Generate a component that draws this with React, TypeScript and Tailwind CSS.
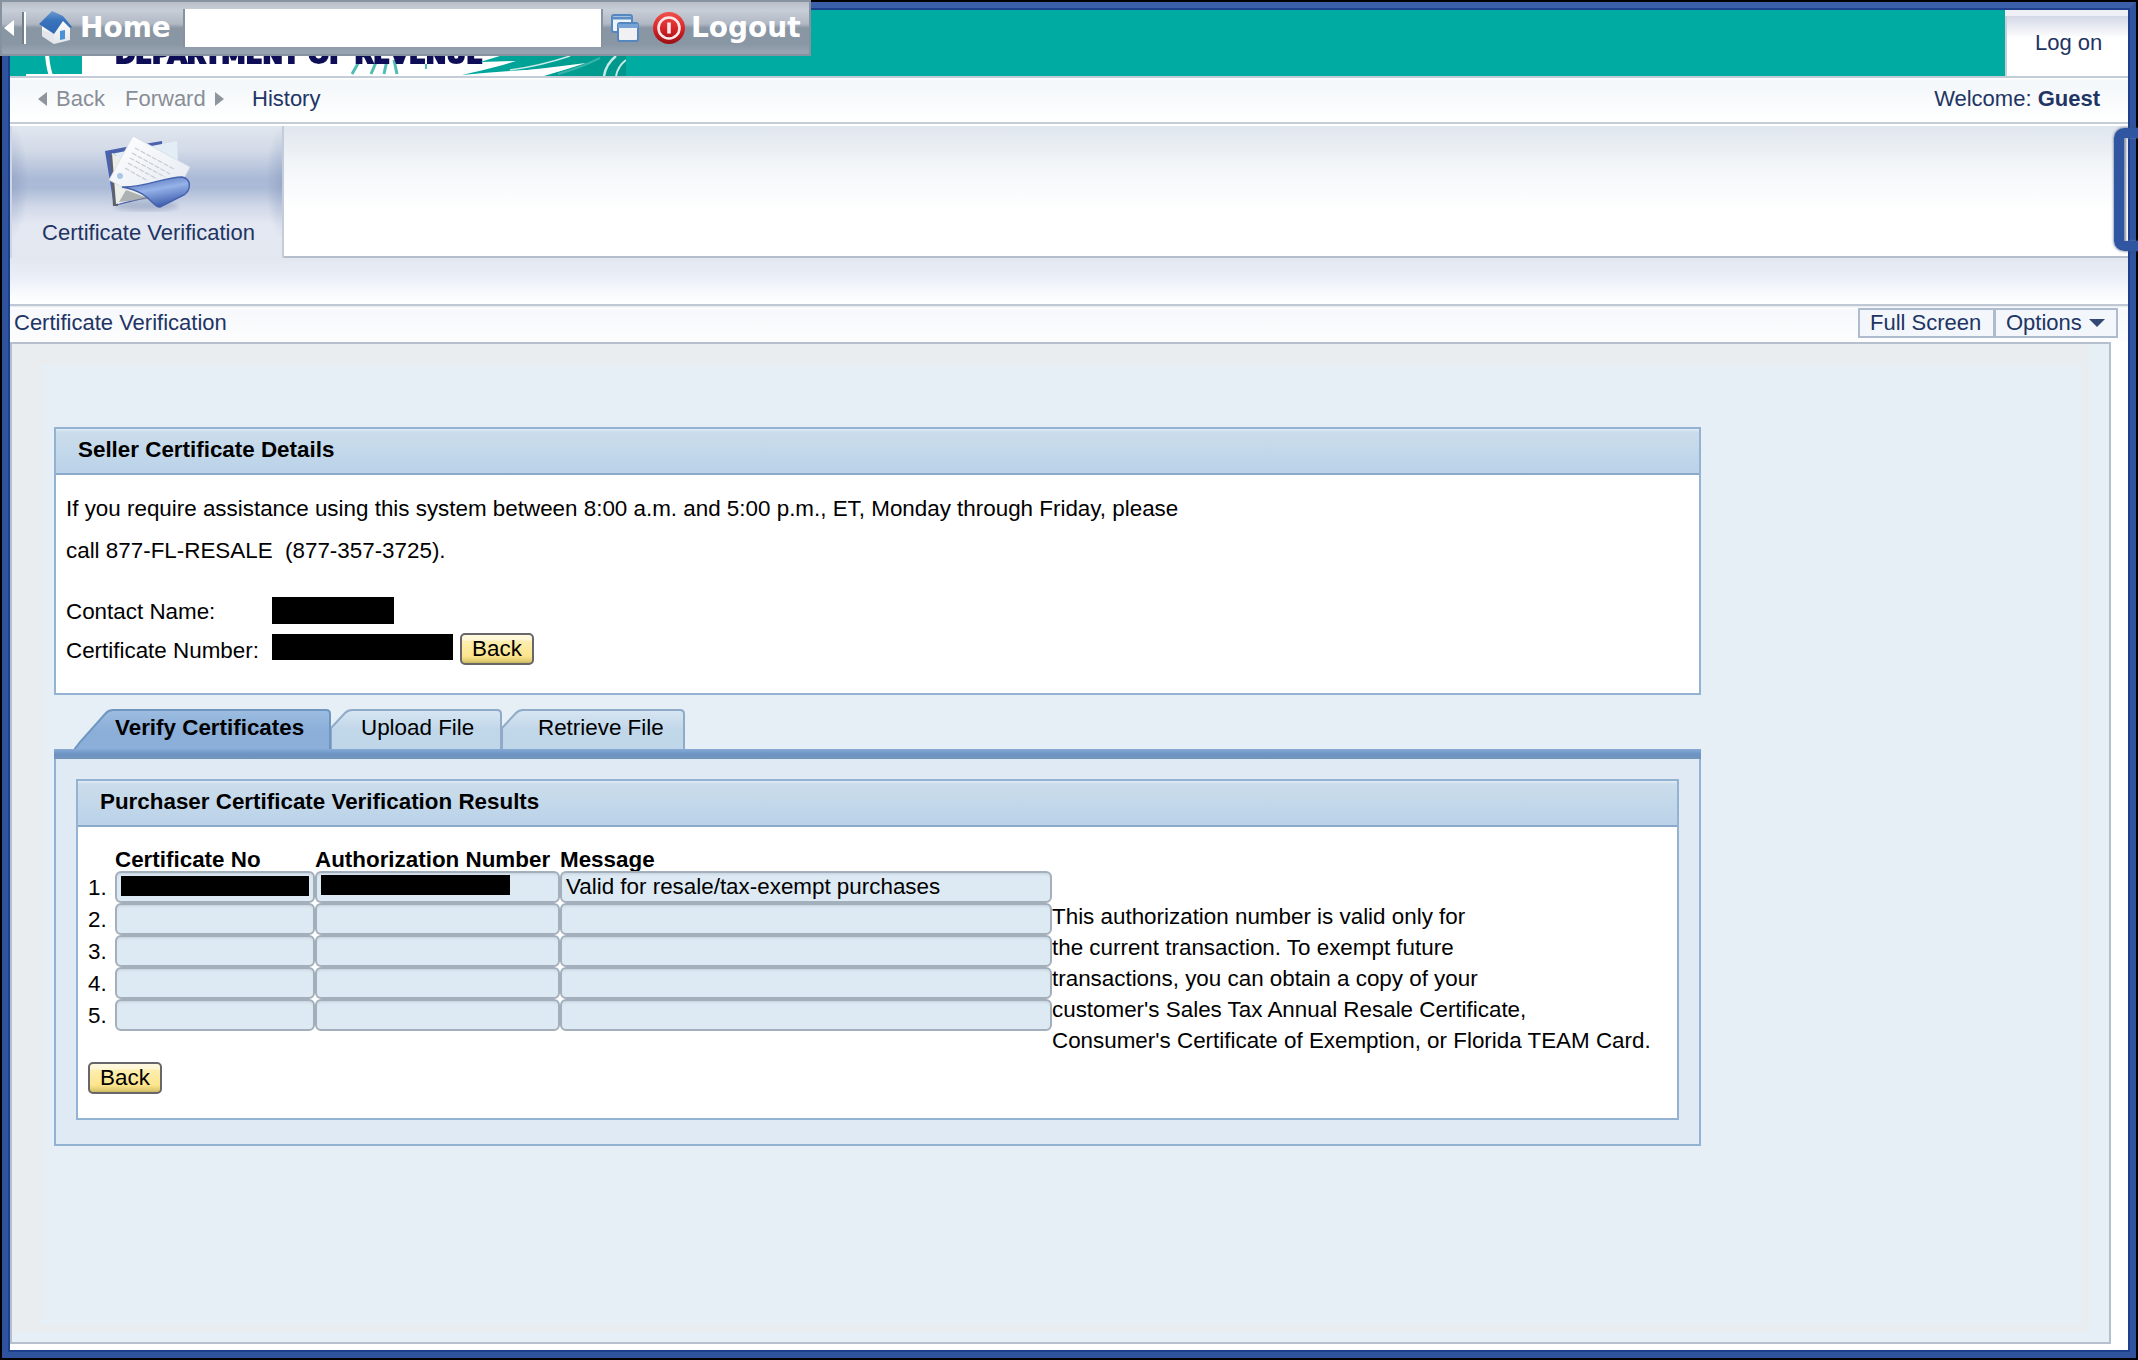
import type { ReactNode } from 'react'

const RESULTS = [
  { id: 1, message: 'Valid for resale/tax-exempt purchases', masked: true },
  { id: 2, message: '', masked: false },
  { id: 3, message: '', masked: false },
  { id: 4, message: '', masked: false },
  { id: 5, message: '', masked: false },
]

const NOTE_LINES = [
  'This authorization number is valid only for',
  'the current transaction. To exempt future',
  'transactions, you can obtain a copy of your',
  "customer's Sales Tax Annual Resale Certificate,",
  "Consumer's Certificate of Exemption, or Florida TEAM Card.",
]

function HomeIcon() {
  return (
    <svg width="34" height="36" viewBox="0 0 34 36" className="shrink-0">
      <defs>
        <linearGradient id="roof" x1="0" y1="0" x2="0" y2="1">
          <stop offset="0" stopColor="#6f9bd0" />
          <stop offset="0.4" stopColor="#3a74bd" />
          <stop offset="1" stopColor="#2f68b3" />
        </linearGradient>
        <linearGradient id="wall" x1="0" y1="0" x2="0" y2="1">
          <stop offset="0" stopColor="#ffffff" />
          <stop offset="1" stopColor="#e4e6ea" />
        </linearGradient>
      </defs>
      <path d="M3 15 L3 26 L15 34 L31 30 L31 17 L23 7 Z" fill="url(#wall)" />
      <path d="M3 20 L3 26 L15 34 L15 24 Z" fill="#e3e6ea" />
      <path d="M13 1 L24 6 L33 17 L31 18 L24 11 L15 24 L0 14 Z" fill="url(#roof)" />
      <path d="M21 21 L26 20 L26 29 L21 30 Z" fill="#4a92d4" />
    </svg>
  )
}

function WindowsIcon() {
  return (
    <svg width="30" height="30" viewBox="0 0 30 30" className="shrink-0">
      <rect x="2" y="2" width="20" height="17" rx="2" fill="#eef3f9" stroke="#5487c0" strokeWidth="2" />
      <path d="M2 5 H22" stroke="#5b8dc4" strokeWidth="3" />
      <rect x="8" y="10" width="20" height="18" rx="2" fill="#f1f1f4" stroke="#5487c0" strokeWidth="2" />
      <path d="M8 13 H28" stroke="#76a3d4" strokeWidth="4" />
    </svg>
  )
}

function PowerIcon() {
  return (
    <svg width="32" height="34" viewBox="0 0 32 34" className="shrink-0">
      <defs>
        <linearGradient id="power" x1="0" y1="0" x2="0" y2="1">
          <stop offset="0" stopColor="#f0504c" />
          <stop offset="0.5" stopColor="#d8262a" />
          <stop offset="1" stopColor="#980f12" />
        </linearGradient>
      </defs>
      <circle cx="16" cy="17" r="16" fill="url(#power)" />
      <circle cx="16" cy="17" r="10.5" fill="none" stroke="#fbe9e9" strokeWidth="2.6" />
      <path d="M16 11.5 V22.5" stroke="#fbe9e9" strokeWidth="3.6" />
    </svg>
  )
}

function FolderIcon() {
  return (
    <svg width="92" height="82" viewBox="0 0 92 82">
      <defs>
        <linearGradient id="flap" x1="0.2" y1="0" x2="0.6" y2="1">
          <stop offset="0" stopColor="#4b68b4" />
          <stop offset="0.45" stopColor="#96b2e8" />
          <stop offset="1" stopColor="#3a58ab" />
        </linearGradient>
        <linearGradient id="sheet" x1="0" y1="0" x2="1" y2="1">
          <stop offset="0" stopColor="#ffffff" />
          <stop offset="1" stopColor="#e6ebf2" />
        </linearGradient>
        <filter id="soft">
          <feGaussianBlur stdDeviation="2.5" />
        </filter>
      </defs>
      <ellipse cx="42" cy="72" rx="32" ry="5" fill="#7f8fb2" opacity="0.45" filter="url(#soft)" />
      <path d="M1 17 L22 13 L58 7 L60 60 L10 72 Z" fill="#4a62ae" />
      <path d="M7 20 L73 7 L75 50 L14 70 Z" fill="#e3edf6" />
      <path d="M6 20 L9 72 L14 72 L12 21 Z" fill="#5d616c" />
      <path d="M8 19 L12 70 L48 62 L40 40 Z" fill="#eceeea" />
      <path d="M15 68 L22 56 L46 65 Z" fill="#85898c" opacity="0.6" />
      <path d="M29 2 L86 33 L78 48 L20 54 L5 46 Z" fill="url(#sheet)" stroke="#d3dbe4" strokeWidth="0.8" />
      <g stroke="#c3cad3" strokeWidth="1.1" strokeDasharray="5 1.5">
        <path d="M31 14 L70 35" />
        <path d="M28 19 L66 40" />
        <path d="M26 24 L61 43" />
        <path d="M24 29 L53 45" />
        <path d="M21 34 L44 47" />
      </g>
      <circle cx="16" cy="42" r="3" fill="#a9c8e6" />
      <path d="M18 53 C40 54 60 43 78 43 C88 45 87 56 80 61 L56 73 C49 74 47 58 18 53 Z" fill="url(#flap)" stroke="#4462ad" strokeWidth="1.4" />
    </svg>
  )
}

function BannerLogo() {
  return (
    <svg width="616" height="66" viewBox="0 0 616 66" className="block">
      <defs>
        <linearGradient id="palm" x1="0" y1="0" x2="1" y2="0">
          <stop offset="0" stopColor="#00a99d" />
          <stop offset="1" stopColor="#04978b" />
        </linearGradient>
        <filter id="edge">
          <feGaussianBlur stdDeviation="0.7" />
        </filter>
      </defs>
      <rect width="616" height="66" fill="#fff" />
      <path d="M0 0 H72 V64 H16 V66 H0 Z" fill="#00aba2" />
      <path d="M37 40 Q37 54 41 66" stroke="#fff" strokeWidth="4" fill="none" />
      <g stroke="#4fbdb3" strokeWidth="3" fill="none" filter="url(#edge)">
        <path d="M350 50 L342 64" />
        <path d="M367 50 L361 64" />
        <path d="M377 50 L374 64" />
        <path d="M384 50 L387 64" />
        <path d="M416 54 L416 59" strokeWidth="2" />
      </g>
      <text x="105" y="52.5" textLength="368" lengthAdjust="spacingAndGlyphs" fontFamily="DejaVu Sans" fontWeight="700" fontSize="24" fill="#100f58" stroke="#100f58" strokeWidth="2" filter="url(#edge)">
        DEPARTMENT OF REVENUE
      </text>
      <g filter="url(#edge)">
        <path d="M510 40 H616 V66 H534 L560 58 Q500 60 452 65 Q490 56 506 51 L470 52 Z" fill="url(#palm)" />
        <path d="M482 64 Q530 59 576 53 Q550 62 528 66 H478 Z" fill="#fff" />
        <g stroke="#c6eae6" fill="none">
          <path d="M500 60 Q530 56 560 46" strokeWidth="1.5" />
          <path d="M548 64 Q570 58 590 48" stroke="#35b3a9" strokeWidth="2" />
          <path d="M594 66 Q596 54 606 46" strokeWidth="2.5" />
          <path d="M606 66 Q608 56 616 50" strokeWidth="2" />
        </g>
      </g>
    </svg>
  )
}

function Toolbar() {
  return (
    <div className="absolute left-0 top-0 z-20 flex h-[56px] w-[811px] items-center border-2 border-[#8692a0] bg-[linear-gradient(#b8bfc8_0px,#c8ced7_8px,#b0b8c4_22px,#9ca6b3_24px,#8996a3_26px,#8996a3_42px,#98a4b2_50px,#96a2b0_52px)] font-['DejaVu_Sans',Verdana,sans-serif] text-[28px] font-bold leading-[52px] text-white">
      <svg width="11" height="18" viewBox="0 0 11 18" className="ml-[2px]">
        <path d="M0 9 L10 1 V17 Z" fill="#fff" />
      </svg>
      <div className="ml-[7px] h-[32px] w-1 border-l-2 border-r-2 border-l-[#727e8c] border-r-white" />
      <div className="ml-[13px] flex items-center">
        <HomeIcon />
        <span className="ml-[7px] w-[103px]">Home</span>
      </div>
      <div className="h-[38px] w-[420px] border-x-2 border-[#8692a0] bg-white" />
      <div className="ml-[7px]">
        <WindowsIcon />
      </div>
      <div className="ml-[13px] flex items-center">
        <PowerIcon />
        <span className="ml-[6px]">Logout</span>
      </div>
    </div>
  )
}

function BackButton() {
  return (
    <button className="flex h-8 w-[74px] items-center justify-center rounded-[5px] border-2 border-[#67676b] bg-[linear-gradient(#fff9e0_0%,#fff6d4_18%,#fdeeb0_22%,#fde58d_75%,#e2cd74_92%,#cdb75e_100%)] pb-px leading-7">
      Back
    </button>
  )
}

function PanelHeader({ children }: { children: ReactNode }) {
  return (
    <div className="h-[46px] border-b-2 border-[#8aa9cc] bg-[linear-gradient(#e2edf5_0px,#cbddeb_3px,#c3d8ea_22px,#bad1e8_44px)] pl-[22px] font-bold leading-[42px]">
      {children}
    </div>
  )
}

type TabProps = { label: string; width: string; path: string; edge: string; from: string; to: string; box: number; textPos: string }

function FileTab({ label, width, path, edge, from, to, box, textPos }: TabProps) {
  const gid = `tab-${box}`
  return (
    <div className={`relative h-10 ${width}`}>
      <svg width={box} height="40" className="absolute left-0 top-0">
        <defs>
          <linearGradient id={gid} x1="0" y1="0" x2="0" y2="1">
            <stop offset="0" stopColor={from} />
            <stop offset="0.5" stopColor={to} />
            <stop offset="1" stopColor={to} />
          </linearGradient>
        </defs>
        <path d={path} fill={`url(#${gid})`} stroke={edge} strokeWidth="2" />
      </svg>
      <span className={`relative block whitespace-nowrap leading-[38px] ${textPos}`}>{label}</span>
    </div>
  )
}

function Cell({ width, children }: { width: string; children?: ReactNode }) {
  return (
    <div className={`h-8 rounded-[6px] border-2 border-[#a3afbb] bg-[#dde9f3] shadow-[inset_0_3px_3px_-2px_#c3d0dc] ${width}`}>
      {children}
    </div>
  )
}

export default function App() {
  return (
    <div className="relative h-[1360px] w-[2138px] overflow-hidden bg-black p-[2px] font-['Liberation_Sans',Arial,sans-serif] text-[22.4px] text-black">
      <Toolbar />

      {/* Blue window frame */}
      <div className="h-full border-[6px] border-[#2f539d] border-t-[#3b5fa9] shadow-[inset_0_0_0_1px_#1b3f8d]">
        <div className="flex h-full flex-col border-2 border-[#1c408d] bg-white text-[22px] text-[#213463]">
          {/* Banner */}
          <div className="flex h-[66px] shrink-0 bg-[#00aba2]">
            <BannerLogo />
            <div className="ml-auto w-[123px] bg-[#eef0f6] pt-[6px]">
              <div className="h-[60px] border-l-2 border-[#c9d0dc] bg-[linear-gradient(#d3d8e6_0px,#ffffff_22px)] pl-[28px] leading-[53px]">Log on</div>
            </div>
          </div>

          {/* History navigation */}
          <div className="flex h-[48px] shrink-0 items-center border-b-2 border-t-2 border-[#c3ccd7] bg-[linear-gradient(#ffffff_0px,#f3f7fa_3px,#ffffff_44px)] pb-[4px] pr-[28px]">
            <svg width="10" height="16" viewBox="0 0 10 16" className="ml-[28px] mt-[1px]">
              <path d="M0 8 L9 1 V15 Z" fill="#8f959d" />
            </svg>
            <span className="ml-[8px] w-[69px] text-[#888e97]">Back</span>
            <span className="w-[89px] text-[#888e97]">Forward</span>
            <svg width="10" height="16" viewBox="0 0 10 16" className="mt-[1px]">
              <path d="M10 8 L1 1 V15 Z" fill="#8f959d" />
            </svg>
            <span className="ml-[28px]">History</span>
            <span className="ml-auto">
              Welcome: <b>Guest</b>
            </span>
          </div>

          {/* Top level tabs */}
          <div className="flex h-[134px] shrink-0 pt-[2px]">
            <div className="flex w-[274px] flex-col items-center border-x-2 border-l-[#d0d6e2] border-r-[#c4ccda] bg-[radial-gradient(ellipse_16px_56px_at_0px_56px,#8799bd80,#8799bd00),radial-gradient(ellipse_16px_56px_at_270px_56px,#8799bd80,#8799bd00),linear-gradient(#e1e7ef_0px,#d3dbe8_24px,#abbad6_52px,#abbad6_62px,#d0d8e8_80px,#e4e8f2_98px,#e3e7f0_132px)]">
              <div className="mt-[8px] h-[82px] pl-[6px]">
                <FolderIcon />
              </div>
              <span className="mt-[4px] pl-[3px] leading-[26px]">Certificate Verification</span>
            </div>
            <div className="flex-1 border-b-2 border-[#b5bfcc] bg-[linear-gradient(#e0e6ee_0px,#f3f6f9_40px,#ffffff_85px)]" />
          </div>
          <div className="h-[46px] shrink-0 bg-[linear-gradient(#e3e7f0,#eaeef7_40%,#f5f8fb_70%,#ffffff)]" />

          {/* Page title */}
          <div className="flex h-[38px] shrink-0 border-t-2 border-[#c0c8d5] bg-[linear-gradient(#dfe5ec_0px,#ffffff_2px,#f6f8fb_4px,#fdfdfe_36px)] pl-1 pr-[10px]">
            <span className="leading-[33px]">Certificate Verification</span>
            <div className="ml-auto mt-[2px] flex h-[30px] w-[260px] border-2 border-[#afbbcf] bg-[#f3f7fc] leading-[25px]">
              <span className="w-[136px] border-r-[3px] border-[#afbbcf] pl-[10px]">Full Screen</span>
              <span className="flex flex-1 pl-[10px]">
                Options
                <svg width="16" height="9" viewBox="0 0 16 9" className="ml-[7px] mt-[9px]">
                  <path d="M0 0 H16 L8 8 Z" fill="#344874" />
                </svg>
              </span>
            </div>
          </div>

          {/* Work area */}
          <div className="h-[1002px] w-[2101px] shrink-0 border-2 border-[#b5bfcd] bg-[#e7eff6] pb-[10px] pr-[20px] text-[22.4px] text-black">
            <div className="h-full border-b-[7px] border-l-[30px] border-r-[7px] border-t-[21px] border-[#e9edf0]">
              <div className="ml-[12px] w-[1647px] pt-[62px]">
                <section className="h-[268px] border-2 border-[#94b2d1] bg-white">
                  <PanelHeader>Seller Certificate Details</PanelHeader>
                  <div className="pl-[10px] pt-[12px]">
                    <p className="leading-[43px]">If you require assistance using this system between 8:00 a.m. and 5:00 p.m., ET, Monday through Friday, please</p>
                    <p className="whitespace-pre leading-[41px]">call 877-FL-RESALE  (877-357-3725).</p>
                    <div className="mt-[21px] flex h-[36px] items-start">
                      <span className="w-[206px] leading-[39px]">Contact Name:</span>
                      <div className="mt-[5px] h-[27px] w-[122px] bg-black" />
                    </div>
                    <div className="flex items-start">
                      <span className="w-[206px] leading-[45px]">Certificate Number:</span>
                      <div className="mt-[6px] h-[26px] w-[181px] bg-black" />
                      <div className="ml-[7px] mt-[5px]">
                        <BackButton />
                      </div>
                    </div>
                  </div>
                </section>

                <div className="mt-[14px] flex pl-[20px]">
                  <FileTab label="Verify Certificates" width="w-[257px]" box={258} path="M-1 42 Q4 36 6 33 L32 4 Q35 1 39 1 H252 Q256 1 256 5 V42" edge="#6f96c0" from="#9dbde0" to="#8bafd9" textPos="pl-[41px] font-bold" />
                  <FileTab label="Upload File" width="w-[171px]" box={172} path="M0 42 V19 L14 4 Q17 1 21 1 H166 Q170 1 170 5 V42" edge="#8fabc8" from="#d8e6f2" to="#c0d6e9" textPos="pl-[30px]" />
                  <FileTab label="Retrieve File" width="w-[184px]" box={184} path="M0 42 V19 L14 4 Q17 1 21 1 H178 Q182 1 182 5 V42" edge="#8fabc8" from="#d8e6f2" to="#c0d6e9" textPos="pl-[36px]" />
                </div>
                <div className="h-[10px] bg-[linear-gradient(#86abd6,#6c93c3_50%,#7395bb)]" />

                <div className="h-[387px] border-2 border-t-0 border-[#94b2d1] bg-[#e0eaf5] px-[20px] pt-[20px]">
                  <section className="h-[341px] border-2 border-[#94b2d1] bg-white">
                    <PanelHeader>Purchaser Certificate Verification Results</PanelHeader>
                    <div className="flex pl-[10px]">
                      <div>
                        <div className="flex h-[44px] items-end pl-[27px] font-bold leading-[22px]">
                          <span className="w-[200px]">Certificate No</span>
                          <span className="w-[245px] whitespace-nowrap">Authorization Number</span>
                          <span>Message</span>
                        </div>
                        {RESULTS.map(row => (
                          <div key={row.id} className="flex h-8">
                            <span className="w-[27px] leading-[33px]">{row.id}.</span>
                            <Cell width="w-[200px]">{row.masked && <div className="ml-[4px] mt-[3px] h-[20px] w-[188px] bg-black" />}</Cell>
                            <Cell width="w-[245px]">{row.masked && <div className="ml-[4px] mt-[2px] h-[20px] w-[189px] bg-black" />}</Cell>
                            <Cell width="w-[492px]">
                              <span className="block pl-[4px] leading-[27px]">{row.message}</span>
                            </Cell>
                          </div>
                        ))}
                      </div>
                      <div className="pt-[74px]">
                        {NOTE_LINES.map(line => (
                          <p key={line} className="whitespace-nowrap leading-[31px]">{line}</p>
                        ))}
                      </div>
                    </div>
                    <div className="pl-[10px] pt-[6px]">
                      <BackButton />
                    </div>
                  </section>
                </div>
              </div>
            </div>
          </div>
        </div>
      </div>

      {/* Side handle */}
      <div className="absolute right-[-14px] top-[128px] h-[123px] w-[38px] rounded-[10px] border-[10px] border-[#3156a1] shadow-[inset_2px_0_2px_#8a94a8,0_0_3px_#3d4f7d]" />
    </div>
  )
}
